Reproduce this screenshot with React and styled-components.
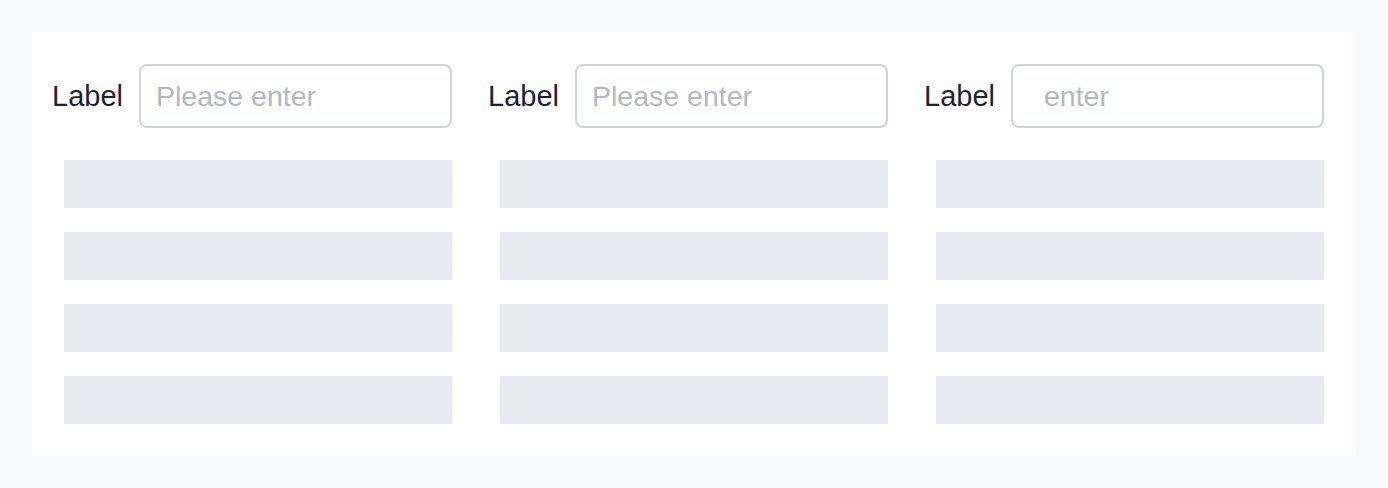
import React from "react";
import styled, { createGlobalStyle } from "styled-components";

const Global = createGlobalStyle`
  html, body {
    margin: 0;
    padding: 0;
    background: #f7f8fa;
  }
  body {
    font-family: "Liberation Sans", Arial, sans-serif;
  }
`;

const Page = styled.div`
  padding: 32px;
  width: 1388px;
  height: 488px;
  box-sizing: border-box;
`;

const Panel = styled.section`
  background: #fff;
  padding: 32px;
  display: grid;
  grid-template-columns: repeat(3, 388px);
  column-gap: 48px;
`;

const Column = styled.div`
  display: flex;
  flex-direction: column;
  gap: 24px;
`;

const Field = styled.div`
  display: flex;
  align-items: center;
  gap: 16px;
  margin-left: -12px;
  margin-bottom: 8px;
`;

const Label = styled.label`
  font-size: 29px;
  color: #1d1f3a;
  white-space: nowrap;
`;

const Input = styled.input`
  flex: 1;
  min-width: 0;
  height: 64px;
  box-sizing: border-box;
  border: 2px solid #d0d2da;
  border-radius: 8px;
  padding: 0 14px 0 ${(p) => p.$indent || 15}px;
  font-family: inherit;
  font-size: 28.5px;
  color: #1d1f3a;
  background: #fff;
  outline: none;

  &::placeholder {
    color: #b3b6c3;
  }
`;

const Bar = styled.div`
  height: 48px;
  background: #e7e9ee;
`;

const columns = [
  { placeholder: "Please enter" },
  { placeholder: "Please enter" },
  { placeholder: "enter", indent: 31 },
];

export default function App() {
  return (
    <>
      <Global />
      <Page>
        <Panel>
          {columns.map((c, i) => (
            <Column key={i}>
              <Field>
                <Label>Label</Label>
                <Input placeholder={c.placeholder} $indent={c.indent} />
              </Field>
              {[0, 1, 2, 3].map((b) => (
                <Bar key={b} />
              ))}
            </Column>
          ))}
        </Panel>
      </Page>
    </>
  );
}
